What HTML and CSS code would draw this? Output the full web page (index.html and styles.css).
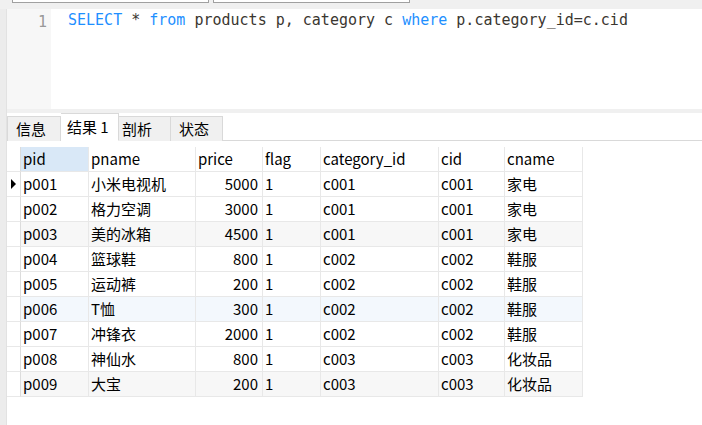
FILE: index.html
```html
<!DOCTYPE html>
<html>
<head>
<meta charset="utf-8">
<link rel="stylesheet" href="styles.css">
</head>
<body>
<div class="topbar">
  <div class="field f1"></div>
  <div class="field f2"></div>
</div>
<div class="body">
  <div class="leftstrip"></div>
  <div class="main">
    <div class="editor">
      <div class="gutter"><span class="ln">1</span></div>
      <div class="code"><span class="kw">SELECT</span> * <span class="kw">from</span> products p, category c <span class="kw">where</span> p.category_id=c.cid</div>
    </div>
    <div class="sep"></div>
    <div class="tabs">
      <div class="tab t1">信息</div>
      <div class="tab active t2">结果 1</div>
      <div class="tab t3">剖析</div>
      <div class="tab t4">状态</div>
    </div>
    <div class="grid">
      <div class="c ind hd"></div>
      <div class="c hd sel">pid</div>
      <div class="c hd">pname</div>
      <div class="c hd">price</div>
      <div class="c hd">flag</div>
      <div class="c hd">category_id</div>
      <div class="c hd">cid</div>
      <div class="c hd">cname</div>

      <div class="c ind"><span class="arrow"></span></div>
      <div class="c">p001</div><div class="c">小米电视机</div><div class="c num">5000</div><div class="c">1</div><div class="c">c001</div><div class="c">c001</div><div class="c">家电</div>

      <div class="c ind"></div>
      <div class="c">p002</div><div class="c">格力空调</div><div class="c num">3000</div><div class="c">1</div><div class="c">c001</div><div class="c">c001</div><div class="c">家电</div>

      <div class="c ind"></div>
      <div class="c g">p003</div><div class="c g">美的冰箱</div><div class="c g num">4500</div><div class="c g">1</div><div class="c g">c001</div><div class="c g">c001</div><div class="c g">家电</div>

      <div class="c ind"></div>
      <div class="c">p004</div><div class="c">篮球鞋</div><div class="c num">800</div><div class="c">1</div><div class="c">c002</div><div class="c">c002</div><div class="c">鞋服</div>

      <div class="c ind"></div>
      <div class="c">p005</div><div class="c">运动裤</div><div class="c num">200</div><div class="c">1</div><div class="c">c002</div><div class="c">c002</div><div class="c">鞋服</div>

      <div class="c ind"></div>
      <div class="c b">p006</div><div class="c b">T恤</div><div class="c b num">300</div><div class="c b">1</div><div class="c b">c002</div><div class="c b">c002</div><div class="c b">鞋服</div>

      <div class="c ind"></div>
      <div class="c">p007</div><div class="c">冲锋衣</div><div class="c num">2000</div><div class="c">1</div><div class="c">c002</div><div class="c">c002</div><div class="c">鞋服</div>

      <div class="c ind"></div>
      <div class="c">p008</div><div class="c">神仙水</div><div class="c num">800</div><div class="c">1</div><div class="c">c003</div><div class="c">c003</div><div class="c">化妆品</div>

      <div class="c ind"></div>
      <div class="c g">p009</div><div class="c g">大宝</div><div class="c g num">200</div><div class="c g">1</div><div class="c g">c003</div><div class="c g">c003</div><div class="c g">化妆品</div>
    </div>
  </div>
</div>
</body>
</html>
```
FILE: styles.css
```css
* { box-sizing: border-box; }
html, body { margin: 0; padding: 0; }
body {
  width: 702px;
  height: 425px;
  overflow: hidden;
  background: #ffffff;
  font-family: "Noto Sans CJK SC", "Noto Sans", sans-serif;
  font-size: 15px;
  color: #000;
  display: flex;
  flex-direction: column;
}
.topbar {
  height: 9px;
  background: #f0f0f0;
  display: flex;
  flex: none;
}
.field {
  height: 3px;
  border: 1px solid #a0a0a0;
  border-top: none;
  background: #fff;
}
.f1 { margin-left: 12px; width: 197px; }
.f2 { margin-left: 4px; width: 197px; }
.body {
  flex: 1;
  display: flex;
}
.leftstrip {
  width: 7px;
  flex: none;
  background: #ececec;
  border-right: 1px solid #e2e2e2;
}
.main {
  flex: 1;
  display: flex;
  flex-direction: column;
}
.editor {
  height: 100px;
  display: flex;
  flex: none;
}
.gutter {
  width: 44px;
  background: #f7f7f7;
  text-align: right;
  padding-right: 4px;
  padding-top: 1px;
}
.ln {
  font-family: "DejaVu Sans Mono", monospace;
  font-size: 15px;
  color: #999;
  line-height: 20px;
}
.code {
  padding-left: 17px;
  padding-top: 1px;
  font-family: "DejaVu Sans Mono", monospace;
  font-size: 15px;
  line-height: 20px;
  color: #3a3630;
  white-space: pre;
}
.kw { color: #1e8fff; }
.sep {
  height: 4px;
  background: #f0f0f0;
  flex: none;
}
.tabs {
  height: 28px;
  flex: none;
  display: flex;
  align-items: flex-end;
  border-bottom: 1px solid #d9d9d9;
}
.tab {
  height: 25px;
  background: #f0f0f0;
  border: 1px solid #d9d9d9;
  border-bottom: none;
  border-left: none;
  line-height: 24px;
  padding-left: 8px;
  margin-bottom: -1px;
}
.tab.t1 { width: 54px; border-left: 1px solid #d9d9d9; }
.tab.active {
  height: 28px;
  background: #fff;
  width: 58px;
  padding-left: 6px;
  line-height: 26px;
  border-bottom: 1px solid #fff;
}
.tab.t3 { width: 52px; padding-left: 3px; }
.tab.t4 { width: 52px; padding-left: 8px; }
.grid {
  margin-top: 6px;
  display: grid;
  grid-template-columns: 14px 68px 107px 67px 58px 118px 66px 78px;
  grid-auto-rows: 25px;
  width: max-content;
}
.c {
  border-right: 1px solid #e8e8e8;
  border-bottom: 1px solid #e8e8e8;
  padding-left: 2px;
  line-height: 24px;
  white-space: nowrap;
  overflow: hidden;
}
.c.hd { background: #fff; }
.c.hd.sel { background: #d9e8f7; }
.c.ind { border-right: 1px solid #dcdcdc; padding: 0; display: flex; align-items: center; }
.c.ind.hd { border-bottom: 1px solid #e8e8e8; }
.c.num { text-align: right; padding-right: 4px; padding-left: 0; }
.c.g { background: #f7f7f7; }
.c.b { background: #f3f8fd; }
.arrow {
  width: 0;
  height: 0;
  margin-left: 4px;
  border-top: 5px solid transparent;
  border-bottom: 5px solid transparent;
  border-left: 5px solid #000;
}
```
